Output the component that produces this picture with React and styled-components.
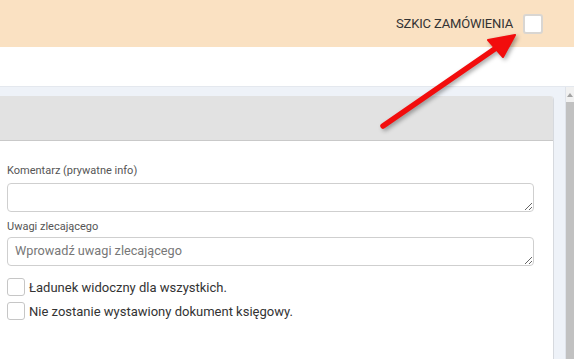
import styled, { createGlobalStyle } from "styled-components";

const GlobalStyle = createGlobalStyle`
  html, body {
    margin: 0;
    padding: 0;
    overflow: hidden;
  }
  body {
    font-family: Roboto, "Liberation Sans", sans-serif;
    color: #333;
  }
  * {
    box-sizing: border-box;
  }
`;

const Page = styled.div`
  position: relative;
  width: 574px;
  height: 359px;
  display: flex;
  flex-direction: column;
`;

const TopBar = styled.div`
  height: 47px;
  background: #fae1c2;
  display: flex;
  align-items: center;
  justify-content: flex-end;
  gap: 10px;
  padding-right: 31px;
`;

const DraftLabel = styled.span`
  font-size: 13px;
  color: #333;
  letter-spacing: -0.15px;
`;

const DraftBox = styled.span`
  width: 20px;
  height: 20px;
  background: #fff;
  border: 2px solid #d9d6d2;
  border-radius: 3px;
`;

const NavStrip = styled.div`
  height: 40px;
  background: #fff;
  border-bottom: 1px solid #e4e8ee;
`;

const Main = styled.div`
  flex: 1;
  background: #eef2f8;
  display: flex;
  padding-top: 9px;
  min-height: 0;
`;

const Panel = styled.div`
  flex: 1;
  display: flex;
  flex-direction: column;
  background: #fff;
  border-right: 1px solid #d6d9de;
  border-top-right-radius: 4px;
  overflow: hidden;
`;

const PanelHeader = styled.div`
  height: 45px;
  background: #e2e2e2;
  border-bottom: 1px solid #c9c9c9;
`;

const PanelBody = styled.div`
  padding: 23px 19px 0 7px;
  display: flex;
  flex-direction: column;
`;

const Field = styled.div`
  display: flex;
  flex-direction: column;
  gap: ${(p) => p.$gap}px;
  margin-bottom: 8px;
`;

const Label = styled.label`
  font-size: 11px;
  line-height: 14px;
  color: #555;
`;

const TextArea = styled.textarea`
  width: 100%;
  height: 29px;
  border: 1px solid #cfcfcf;
  border-radius: 4px;
  padding: 5px 7px;
  font-family: Roboto, "Liberation Sans", sans-serif;
  font-size: 12.7px;
  color: #333;
  background: #fff;
  display: block;

  &::placeholder {
    color: #777;
  }
`;

const CheckList = styled.div`
  display: flex;
  flex-direction: column;
  gap: 6px;
  margin-top: 4px;
`;

const CheckRow = styled.div`
  display: flex;
  align-items: center;
  gap: 4px;
  font-size: 13px;
  color: #333;
`;

const Box = styled.span`
  width: 18px;
  height: 18px;
  border: 1px solid #c6c6c6;
  border-radius: 3px;
  background: #fff;
  flex-shrink: 0;
`;

const Gutter = styled.div`
  width: 11px;
`;

const Scrollbar = styled.div`
  width: 9px;
  display: flex;
  flex-direction: column;
  border-left: 1px solid #dfe3ea;
  background: #f1f1f1;
  margin-top: -9px;
`;

const ScrollArrow = styled.div`
  height: 15px;
  display: flex;
  align-items: center;
  justify-content: center;

  &::after {
    content: "";
    border-left: 3px solid transparent;
    border-right: 3px solid transparent;
    border-bottom: 4px solid #a3a3a3;
  }
`;

const Thumb = styled.div`
  flex: 1;
  background: #c1c1c1;
`;

const Overlay = styled.svg`
  position: absolute;
  left: 0;
  top: 0;
  pointer-events: none;
  filter: drop-shadow(2px 2px 2px rgba(0, 0, 0, 0.35));
`;

const Arrow = () => (
  <Overlay width="574" height="359" viewBox="0 0 574 359">
    <line
      x1="383"
      y1="126"
      x2="499"
      y2="46"
      stroke="#f20d0d"
      strokeWidth="5.5"
      strokeLinecap="round"
    />
    <polygon points="515,35 488,40 503,57" fill="#f20d0d" stroke="#f20d0d" strokeWidth="2" strokeLinejoin="round" />
  </Overlay>
);

const App = () => {
  return (
    <>
      <GlobalStyle />
      <Page>
        <TopBar>
          <DraftLabel>SZKIC ZAMÓWIENIA</DraftLabel>
          <DraftBox />
        </TopBar>
        <NavStrip />
        <Main>
          <Panel>
            <PanelHeader />
            <PanelBody>
              <Field $gap={5}>
                <Label>Komentarz (prywatne info)</Label>
                <TextArea />
              </Field>
              <Field $gap={3}>
                <Label>Uwagi zlecającego</Label>
                <TextArea placeholder="Wprowadź uwagi zlecającego" />
              </Field>
              <CheckList>
                <CheckRow>
                  <Box />
                  Ładunek widoczny dla wszystkich.
                </CheckRow>
                <CheckRow>
                  <Box />
                  Nie zostanie wystawiony dokument księgowy.
                </CheckRow>
              </CheckList>
            </PanelBody>
          </Panel>
          <Gutter />
          <Scrollbar>
            <ScrollArrow />
            <Thumb />
          </Scrollbar>
        </Main>
        <Arrow />
      </Page>
    </>
  );
};

export default App;
